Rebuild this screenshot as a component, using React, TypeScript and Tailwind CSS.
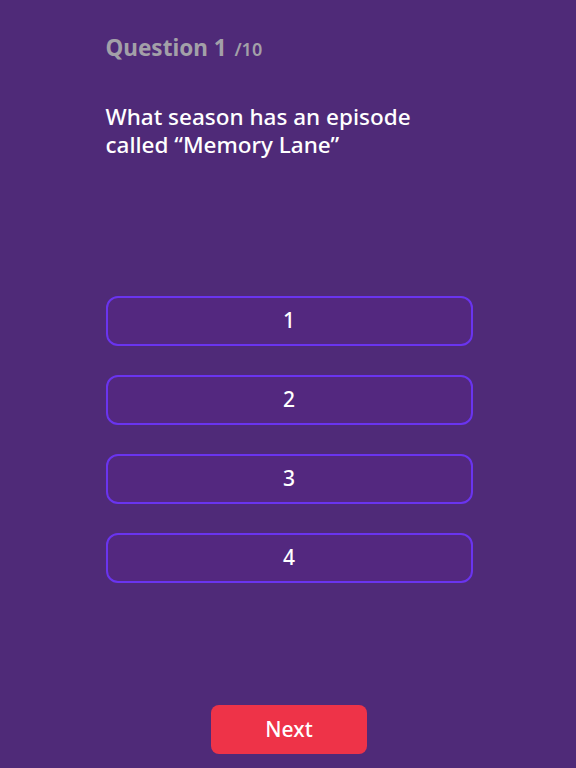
export default function App() {
  const options = ['1', '2', '3', '4'];
  return (
    <div
      className="min-h-screen w-full bg-[#4f2a78] flex flex-col items-center pl-[2px]"
      style={{ fontFamily: '"Noto Sans", "Open Sans", sans-serif' }}
    >
      <div className="w-[367px] flex flex-col pt-[32px]">
        <div className="text-[#a3a0a8] font-bold text-[22.5px] leading-[32px]">
          Question 1 <span className="text-[18px] font-semibold ml-[2px]">/10</span>
        </div>
        <div className="mt-[38px] text-white text-[22.5px] leading-[28px] font-medium">
          What season has an episode
          <br />
          called “Memory Lane”
        </div>
        <div className="mt-[137px] flex flex-col gap-[29px]">
          {options.map((o) => (
            <button
              key={o}
              className="h-[50px] w-full rounded-[12px] border-2 border-[#6a34ef] bg-[#53287f] text-white text-[21px] font-medium"
            >
              {o}
            </button>
          ))}
        </div>
      </div>
      <div className="mt-auto pb-[14px]">
        <button className="w-[156px] h-[49px] rounded-[8px] bg-[#ee3348] text-white text-[21px] font-medium">
          Next
        </button>
      </div>
    </div>
  );
}
